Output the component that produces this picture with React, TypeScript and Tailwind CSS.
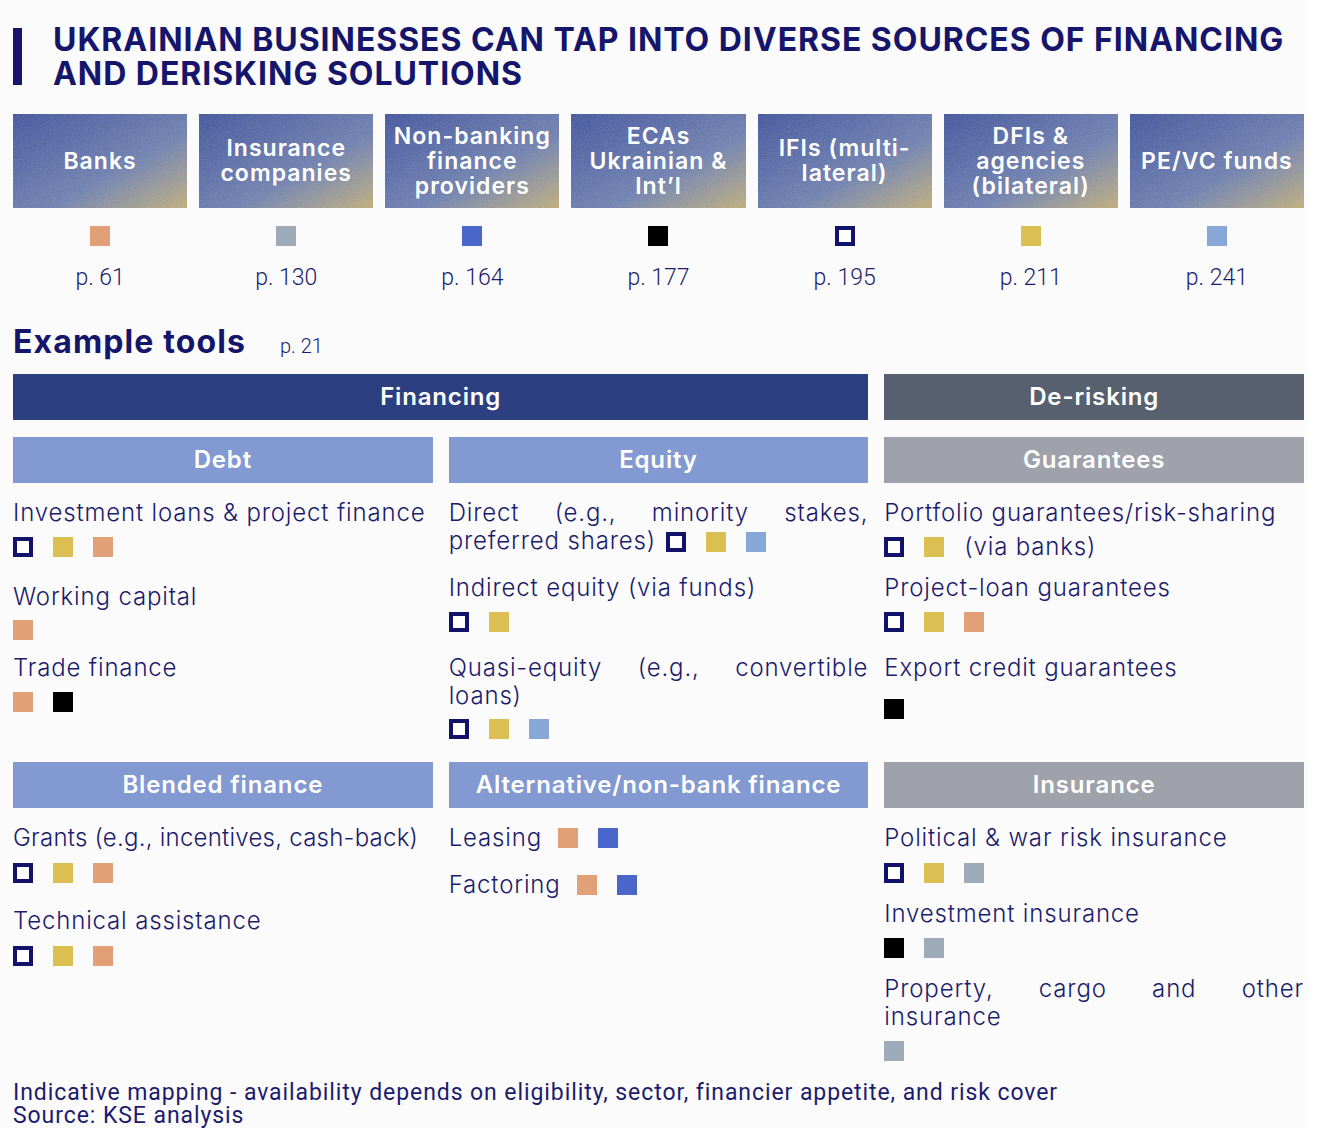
import React from 'react';

type Mark = 'orange' | 'grey' | 'blue' | 'black' | 'ifi' | 'yellow' | 'light';

const markClass: Record<Mark, string> = {
  orange: 'bg-[#e1a077]',
  grey: 'bg-[#9eabb8]',
  blue: 'bg-[#4a66c8]',
  black: 'bg-black',
  ifi: 'bg-white border-4 border-[#12126a]',
  yellow: 'bg-[#dbbf52]',
  light: 'bg-[#87a8d6]',
};

const Sq = ({ m, className = '' }: { m: Mark; className?: string }) => (
  <span className={`inline-block w-5 h-5 shrink-0 ${markClass[m]} ${className}`} />
);

const Marks = ({ list, className = '' }: { list: Mark[]; className?: string }) => (
  <div className={`flex gap-5 ${className}`}>
    {list.map((m, i) => <Sq key={i} m={m} />)}
  </div>
);

const Head = ({ children, grey = false }: { children: React.ReactNode; grey?: boolean }) => (
  <div className={`h-[46px] flex items-center justify-center text-white text-[24px] tracking-[0.035em] font-semibold ${grey ? 'bg-[#9fa2ab]' : 'bg-[#8299d2]'}`}>
    {children}
  </div>
);

const T = ({ children, className = '', tight = false }: { children: React.ReactNode; className?: string; tight?: boolean }) => (
  <p className={`text-[24px] leading-[28px] font-light text-justify ${tight ? 'tracking-[0.01em]' : 'tracking-[0.035em]'} ${className}`}>{children}</p>
);

// grainy texture over the source cards
const Grain = ({ id }: { id: string }) => (
  <svg className="absolute inset-0 w-full h-full opacity-30 pointer-events-none" aria-hidden="true">
    <filter id={id}>
      <feTurbulence type="fractalNoise" baseFrequency="0.9" numOctaves="2" stitchTiles="stitch" />
      <feColorMatrix type="saturate" values="0" />
    </filter>
    <rect width="100%" height="100%" filter={`url(#${id})`} />
  </svg>
);

const sources: { label: React.ReactNode; mark: Mark; page: string }[] = [
  { label: 'Banks', mark: 'orange', page: '61' },
  { label: <>Insurance<br />companies</>, mark: 'grey', page: '130' },
  { label: <>Non-banking<br />finance<br />providers</>, mark: 'blue', page: '164' },
  { label: <>ECAs<br />Ukrainian &amp;<br />Int’l</>, mark: 'black', page: '177' },
  { label: <>IFIs (multi-<br />lateral)</>, mark: 'ifi', page: '195' },
  { label: <>DFIs &amp;<br />agencies<br />(bilateral)</>, mark: 'yellow', page: '211' },
  { label: 'PE/VC funds', mark: 'light', page: '241' },
];

export default function App() {
  return (
    <div className="min-h-[1128px] w-[1319px] bg-white">
      <div className="w-[1308px] min-h-[1128px] bg-[#fbfbfb] pl-[13px] pr-[4px] pt-[23px] text-[#1c1c6c] font-['Inter',sans-serif]">
        {/* Title */}
        <div className="flex items-start">
          <div className="w-[9px] h-[57px] mt-[5px] bg-[#15156b]" />
          <h1 className="ml-[31px] text-[32px] leading-[34px] font-bold tracking-[0.03em] uppercase text-[#15156b]">
            Ukrainian businesses can tap into diverse sources of financing<br />and derisking solutions
          </h1>
        </div>

        {/* Sources */}
        <div className="mt-[23px] grid grid-cols-7 gap-x-3 w-[1291px]">
          {sources.map((s, i) => (
            <div key={i} className="flex flex-col items-center">
              <div className="relative w-full h-[94px] flex items-center justify-center text-center text-white text-[23px] leading-[25px] tracking-[0.045em] font-semibold bg-linear-to-br from-[#3b4e9c] via-[#6a7db2] via-60% to-[#c2ad74] overflow-hidden">
                <Grain id={`grain${i}`} />
                <span className="relative">{s.label}</span>
              </div>
              <Sq m={s.mark} className="mt-[18px]" />
              <div className="mt-[18px] text-[23px] leading-[28px] font-light font-['Roboto',sans-serif]">p. {s.page}</div>
            </div>
          ))}
        </div>

        {/* Example tools */}
        <div className="mt-[32px] flex items-baseline">
          <h2 className="text-[32px] leading-[36px] font-bold tracking-[0.035em] text-[#15156b]">Example tools</h2>
          <span className="ml-[34px] text-[20px] font-light font-['Roboto',sans-serif]">p. 21</span>
        </div>

        <div className="mt-[13px] grid grid-cols-3 gap-x-4 w-[1291px]">
          <div className="col-span-2 h-[46px] flex items-center justify-center bg-[#2c3f7f] text-white text-[24px] tracking-[0.035em] font-semibold">Financing</div>
          <div className="h-[46px] flex items-center justify-center bg-[#57606f] text-white text-[24px] tracking-[0.035em] font-semibold">De-risking</div>

          {/* Debt */}
          <div className="mt-[17px]">
            <Head>Debt</Head>
            <T className="mt-[16px]">Investment loans &amp; project finance</T>
            <Marks className="mt-[10px]" list={['ifi', 'yellow', 'orange']} />
            <T className="mt-[26px]">Working capital</T>
            <Marks className="mt-[9px]" list={['orange']} />
            <T className="mt-[14px]">Trade finance</T>
            <Marks className="mt-[10px]" list={['orange', 'black']} />
          </div>

          {/* Equity */}
          <div className="mt-[17px]">
            <Head>Equity</Head>
            <T className="mt-[16px]">
              Direct (e.g., minority stakes, preferred shares)
              <Sq m="ifi" className="ml-[10px] align-middle" />
              <Sq m="yellow" className="ml-5 align-middle" />
              <Sq m="light" className="ml-5 align-middle" />
            </T>
            <T className="mt-[19px]">Indirect equity (via funds)</T>
            <Marks className="mt-[10px]" list={['ifi', 'yellow']} />
            <T className="mt-[22px]">Quasi-equity (e.g., convertible loans)</T>
            <Marks className="mt-[9px]" list={['ifi', 'yellow', 'light']} />
          </div>

          {/* Guarantees */}
          <div className="mt-[17px]">
            <Head grey>Guarantees</Head>
            <T className="mt-[16px]">Portfolio guarantees/risk-sharing</T>
            <div className="mt-[6px] flex items-center gap-5 text-[24px] leading-[28px] tracking-[0.035em] font-light">
              <Sq m="ifi" />
              <Sq m="yellow" />
              <span>(via banks)</span>
            </div>
            <T className="mt-[13px]">Project-loan guarantees</T>
            <Marks className="mt-[10px]" list={['ifi', 'yellow', 'orange']} />
            <T className="mt-[22px]">Export credit guarantees</T>
            <Marks className="mt-[17px]" list={['black']} />
          </div>

          {/* Blended */}
          <div className="mt-[23px]">
            <Head>Blended finance</Head>
            <T className="mt-[16px] whitespace-nowrap" tight>Grants (e.g., incentives, cash-back)</T>
            <Marks className="mt-[11px]" list={['ifi', 'yellow', 'orange']} />
            <T className="mt-[24px]">Technical assistance</T>
            <Marks className="mt-[11px]" list={['ifi', 'yellow', 'orange']} />
          </div>

          {/* Alternative */}
          <div className="mt-[23px]">
            <Head>Alternative/non-bank finance</Head>
            <div className="mt-[16px] flex items-center text-[24px] leading-[28px] tracking-[0.035em] font-light">
              <span>Leasing</span>
              <Sq m="orange" className="ml-4" />
              <Sq m="blue" className="ml-5" />
            </div>
            <div className="mt-[19px] flex items-center text-[24px] leading-[28px] tracking-[0.035em] font-light">
              <span>Factoring</span>
              <Sq m="orange" className="ml-4" />
              <Sq m="blue" className="ml-5" />
            </div>
          </div>

          {/* Insurance */}
          <div className="mt-[23px]">
            <Head grey>Insurance</Head>
            <T className="mt-[16px]">Political &amp; war risk insurance</T>
            <Marks className="mt-[11px]" list={['ifi', 'yellow', 'grey']} />
            <T className="mt-[17px]">Investment insurance</T>
            <Marks className="mt-[10px]" list={['black', 'grey']} />
            <T className="mt-[17px]">Property, cargo and other insurance</T>
            <Marks className="mt-[10px]" list={['grey']} />
          </div>
        </div>

        {/* Footer */}
        <div className="mt-[20px] pb-[3px] text-[23px] leading-[23px] tracking-[0.04em] font-['Roboto',sans-serif] text-[#1b1b6e]">
          <p>Indicative mapping - availability depends on eligibility, sector, financier appetite, and risk cover</p>
          <p>Source: KSE analysis</p>
        </div>
      </div>
    </div>
  );
}
